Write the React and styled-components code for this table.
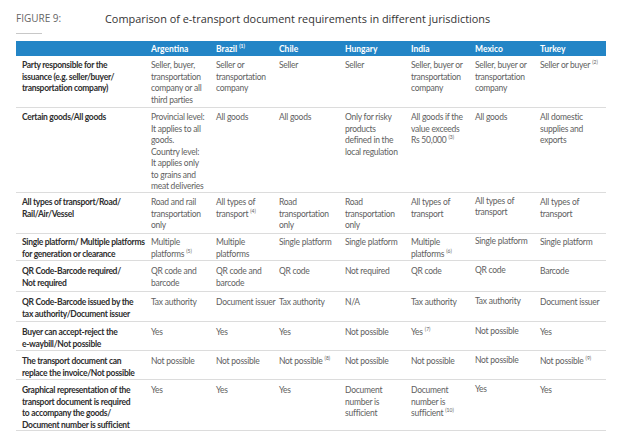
import React from "react";
import styled, { createGlobalStyle } from "styled-components";

const Global = createGlobalStyle`
  body {
    margin: 0;
    background: #ffffff;
    font-family: Lato, "Open Sans", sans-serif;
  }
`;

const Page = styled.div`
  width: 627px;
  height: 447px;
  padding: 12px 21px 0 16px;
  box-sizing: border-box;
  overflow: hidden;
`;

const TitleRow = styled.div`
  display: flex;
  align-items: flex-start;
  height: 29px;
`;

const FigLabel = styled.div`
  width: 89px;
  font-family: "Open Sans", sans-serif;
  font-size: 10px;
  color: #666;
  line-height: 13px;
  &:after {
    content: "";
    display: block;
    width: 26px;
    height: 1px;
    background: #c8c8c8;
    margin-top: 8px;
  }
`;

const Title = styled.div`
  font-family: "Open Sans", sans-serif;
  font-size: 10.9px;
  color: #333;
  line-height: 13px;
`;

const cols = "129px 65px 63px 66px 66px 64px 65px 72px";

const Head = styled.div`
  display: grid;
  grid-template-columns: ${cols};
  background: #2385c6;
  height: 15px;
  align-items: center;
`;

const HeadCell = styled.div`
  color: #fff;
  font-weight: 700;
  font-size: 8.5px;
  padding-left: 6px;
`;

const Row = styled.div`
  display: grid;
  grid-template-columns: ${cols};
  border-bottom: 1.5px solid #dcdcdc;
  height: ${(p) => p.h}px;
  box-sizing: border-box;
  padding-top: ${(p) => p.pt ?? 4}px;
`;

const Cell = styled.div`
  padding-left: 6px;
  font-size: 8.5px;
  line-height: 11.5px;
  white-space: nowrap;
  letter-spacing: ${(p) => (p.label ? "-0.3px" : "-0.25px")};
  color: ${(p) => (p.label ? "#2e2e2e" : "#616161")};
  font-weight: ${(p) => (p.label ? 700 : 400)};
  margin-top: ${(p) => (p.lift ? -1.5 : 0)}px;
`;

const Line = styled.div``;

const Sup = styled.sup`
  font-size: 5px;
  vertical-align: 4px;
  line-height: 0;
  margin-left: 2px;
  letter-spacing: 0;
`;

const headers = [
  ["Argentina"],
  ["Brazil", "(1)"],
  ["Chile"],
  ["Hungary"],
  ["India"],
  ["Mexico"],
  ["Turkey"],
];

// each cell: [lines, footnote on last line]
const rows = [
  {
    h: 52,
    label: ["Party responsible for the", "issuance (e.g. seller/buyer/", "transportation company)"],
    cells: [
      [["Seller, buyer,", "transportation", "company or all", "third parties"]],
      [["Seller or", "transportation", "company"]],
      [["Seller"]],
      [["Seller"]],
      [["Seller, buyer or", "transportation", "company"]],
      [["Seller, buyer or", "transportation", "company"]],
      [["Seller or buyer"], "(2)"],
    ],
  },
  {
    h: 85,
    label: ["Certain goods/All goods"],
    cells: [
      [["Provincial level:", "It applies to all", "goods.", "Country level:", "It applies only", "to grains and", "meat deliveries"]],
      [["All goods"]],
      [["All goods"]],
      [["Only for risky", "products", "defined in the", "local regulation"]],
      [["All goods if the", "value exceeds", "Rs 50,000"], "(3)"],
      [["All goods"]],
      [["All domestic", "supplies and", "exports"]],
    ],
  },
  {
    h: 41,
    label: ["All types of transport/Road/", "Rail/Air/Vessel"],
    cells: [
      [["Road and rail", "transportation", "only"]],
      [["All types of", "transport"], "(4)"],
      [["Road", "transportation", "only"]],
      [["Road", "transportation", "only"]],
      [["All types of", "transport"]],
      [["All types of", "transport"]],
      [["All types of", "transport"]],
    ],
  },
  {
    h: 27,
    pt: 3,
    label: ["Single platform/ Multiple platforms", "for generation or clearance"],
    cells: [
      [["Multiple", "platforms"], "(5)"],
      [["Multiple", "platforms"]],
      [["Single platform"]],
      [["Single platform"]],
      [["Multiple", "platforms"], "(6)"],
      [["Single platform"]],
      [["Single platform"]],
    ],
  },
  {
    h: 31,
    pt: 5,
    label: ["QR Code-Barcode required/", "Not required"],
    cells: [
      [["QR code and", "barcode"]],
      [["QR code and", "barcode"]],
      [["QR code"]],
      [["Not required"]],
      [["QR code"]],
      [["QR code"]],
      [["Barcode"]],
    ],
  },
  {
    h: 30,
    pt: 5,
    label: ["QR Code-Barcode issued by the", "tax authority/Document issuer"],
    cells: [
      [["Tax authority"]],
      [["Document issuer"]],
      [["Tax authority"]],
      [["N/A"]],
      [["Tax authority"]],
      [["Tax authority"]],
      [["Document issuer"]],
    ],
  },
  {
    h: 29,
    pt: 5,
    label: ["Buyer can accept-reject the", "e-waybill/Not possible"],
    cells: [
      [["Yes"]],
      [["Yes"]],
      [["Yes"]],
      [["Not possible"]],
      [["Yes"], "(7)"],
      [["Not possible"]],
      [["Yes"]],
    ],
  },
  {
    h: 29,
    pt: 5,
    label: ["The transport document can", "replace the invoice/Not possible"],
    cells: [
      [["Not possible"]],
      [["Not possible"]],
      [["Not possible"], "(8)"],
      [["Not possible"]],
      [["Not possible"]],
      [["Not possible"]],
      [["Not possible"], "(9)"],
    ],
  },
  {
    h: 51,
    pt: 5,
    label: [
      "Graphical representation of the",
      "transport document is required",
      "to accompany the goods/",
      "Document number is sufficient",
    ],
    cells: [
      [["Yes"]],
      [["Yes"]],
      [["Yes"]],
      [["Document", "number is", "sufficient"]],
      [["Document", "number is", "sufficient"], "(10)"],
      [["Yes"]],
      [["Yes"]],
    ],
  },
];

function Lines({ lines, sup }) {
  return lines.map((l, k) => (
    <Line key={k}>
      {l}
      {sup && k === lines.length - 1 && <Sup>{sup}</Sup>}
    </Line>
  ));
}

export default function App() {
  return (
    <Page>
      <Global />
      <TitleRow>
        <FigLabel>FIGURE 9:</FigLabel>
        <Title>Comparison of e-transport document requirements in different jurisdictions</Title>
      </TitleRow>
      <Head>
        <HeadCell />
        {headers.map(([name, sup]) => (
          <HeadCell key={name}>
            {name}
            {sup && <Sup>{sup}</Sup>}
          </HeadCell>
        ))}
      </Head>
      {rows.map((r, i) => (
        <Row key={i} h={r.h} pt={r.pt}>
          <Cell label>
            <Lines lines={r.label} />
          </Cell>
          {r.cells.map(([lines, sup], j) => (
            <Cell key={j} lift={i >= 2 && j === 5}>
              <Lines lines={lines} sup={sup} />
            </Cell>
          ))}
        </Row>
      ))}
    </Page>
  );
}
